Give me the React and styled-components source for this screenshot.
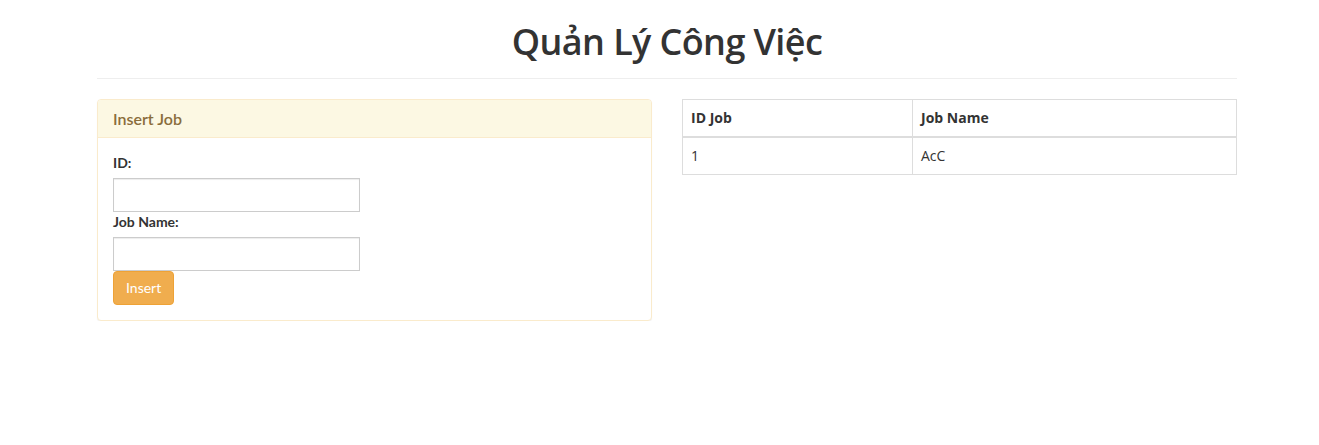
import React from "react"
import styled, { createGlobalStyle } from "styled-components"

const GlobalStyle = createGlobalStyle`
  * {
    box-sizing: border-box;
  }

  body {
    margin: 0;
    padding-left: 15px;
    background: #fff;
    color: #333;
    font-family: "Open Sans", "Noto Sans", sans-serif;
    font-size: 14px;
    line-height: 1.42857;
  }
`

const Container = styled.div`
  width: 1140px;
  margin: 0 auto;
`

const Header = styled.header`
  padding: 21px 0 15px;
  border-bottom: 1px solid #eee;
  margin-bottom: 20px;
`

const Title = styled.h1`
  margin: 0;
  text-align: center;
  font-size: 36px;
  font-weight: 600;
  line-height: 42px;
  color: #333;
  letter-spacing: -0.6px;
`

const Row = styled.div`
  display: grid;
  grid-template-columns: 1fr 1fr;
  gap: 30px;
  align-items: start;
`

const Panel = styled.section`
  border: 1px solid #faebcc;
  border-radius: 4px;
  background: #fff;
  box-shadow: 0 1px 1px rgba(0, 0, 0, 0.05);
  font-family: "Lato", "Open Sans", sans-serif;
`

const PanelHeading = styled.div`
  padding: 10px 15px;
  background: #fcf8e3;
  border-bottom: 1px solid #faebcc;
  border-radius: 3px 3px 0 0;
  color: #8a6d3b;
  font-size: 16px;
  font-weight: 600;
  line-height: 17px;
`

const PanelBody = styled.form`
  padding: 15px;
  display: flex;
  flex-direction: column;
  align-items: flex-start;
`

const Label = styled.label`
  font-weight: 700;
  font-size: 14px;
  margin-bottom: 5px;
  line-height: 20px;
  color: #333;
`

const Input = styled.input`
  width: 247px;
  height: 34px;
  border: 1px solid #ccc;
  padding: 6px 12px;
  font-size: 14px;
  outline: none;
  box-shadow: inset 0 1px 1px rgba(0, 0, 0, 0.075);
`

const Button = styled.button`
  height: 34px;
  padding: 6px 12px;
  border: 1px solid #eea236;
  border-radius: 4px;
  background: #f0ad4e;
  color: #fff;
  font-family: "Lato", sans-serif;
  font-size: 14px;
  line-height: 20px;
  cursor: pointer;
`

const Table = styled.table`
  width: 100%;
  border-collapse: collapse;
  border: 1px solid #ddd;

  th,
  td {
    border: 1px solid #ddd;
    padding: 8px;
    text-align: left;
    line-height: 20px;
    font-size: 14px;
    color: #333;
  }

  th {
    font-weight: 700;
    border-bottom-width: 2px;
  }
`

const jobs = [{ id: 1, name: "AcC" }]

export default function App() {
  return (
    <Container>
      <GlobalStyle />
      <Header>
        <Title>Quản Lý Công Việc</Title>
      </Header>
      <Row>
        <Panel>
          <PanelHeading>Insert Job</PanelHeading>
          <PanelBody onSubmit={e => e.preventDefault()}>
            <Label htmlFor="id">ID:</Label>
            <Input id="id" type="text" />
            <Label htmlFor="name">Job Name:</Label>
            <Input id="name" type="text" />
            <Button type="submit">Insert</Button>
          </PanelBody>
        </Panel>
        <Table>
          <colgroup>
            <col style={{ width: "230px" }} />
            <col />
          </colgroup>
          <thead>
            <tr>
              <th>ID Job</th>
              <th>Job Name</th>
            </tr>
          </thead>
          <tbody>
            {jobs.map(job => (
              <tr key={job.id}>
                <td>{job.id}</td>
                <td>{job.name}</td>
              </tr>
            ))}
          </tbody>
        </Table>
      </Row>
    </Container>
  )
}
